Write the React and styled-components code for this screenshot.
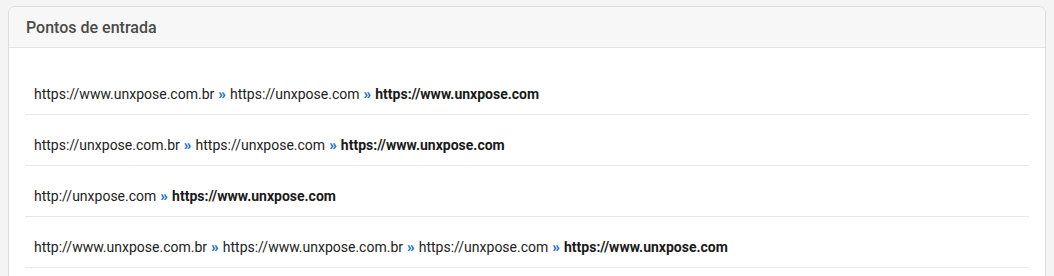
import React from "react";
import styled, { createGlobalStyle } from "styled-components";

const Global = createGlobalStyle`
  html, body { margin: 0; padding: 0; background: #f4f4f4; }
  body { padding: 6px 8px 0; font-family: Roboto, "Liberation Sans", Arial, sans-serif; }
`;

const Card = styled.section`
  background: #fff;
  border: 1px solid #dcdde0;
  border-radius: 7px;
  overflow: hidden;
`;

const Header = styled.header`
  background: #f7f7f7;
  border-bottom: 1px solid #e3e4e7;
  height: 41px;
  display: flex;
  align-items: center;
  padding: 0 17px;
  box-sizing: border-box;
`;

const Title = styled.h3`
  margin: 0;
  font-size: 16px;
  font-weight: 500;
  color: #4a4a4a;
`;

const Body = styled.div`
  padding: 16px 16px 24px;
`;

const Row = styled.div`
  padding: 21px 9px 11px;
  line-height: 18px;
  font-size: 14px;
  color: #222;
  border-bottom: 1px solid #e6e8eb;
  white-space: nowrap;
`;

const Arrow = styled.span`
  color: #1b6fd1;
  font-weight: 900;
  font-size: 15px;
  margin: 0 4px;
`;

const Final = styled.span`
  font-weight: 700;
  color: #1a1a1a;
`;

const chains = [
  ["https://www.unxpose.com.br", "https://unxpose.com", "https://www.unxpose.com"],
  ["https://unxpose.com.br", "https://unxpose.com", "https://www.unxpose.com"],
  ["http://unxpose.com", "https://www.unxpose.com"],
  ["http://www.unxpose.com.br", "https://www.unxpose.com.br", "https://unxpose.com", "https://www.unxpose.com"],
];

export default function App() {
  return (
    <>
      <Global />
      <Card>
        <Header>
          <Title>Pontos de entrada</Title>
        </Header>
        <Body>
          {chains.map((chain, i) => (
            <Row key={i}>
              {chain.map((url, j) => {
                const last = j === chain.length - 1;
                return (
                  <React.Fragment key={j}>
                    {j > 0 && <Arrow>»</Arrow>}
                    {last ? <Final>{url}</Final> : <span>{url}</span>}
                  </React.Fragment>
                );
              })}
            </Row>
          ))}
        </Body>
      </Card>
    </>
  );
}
